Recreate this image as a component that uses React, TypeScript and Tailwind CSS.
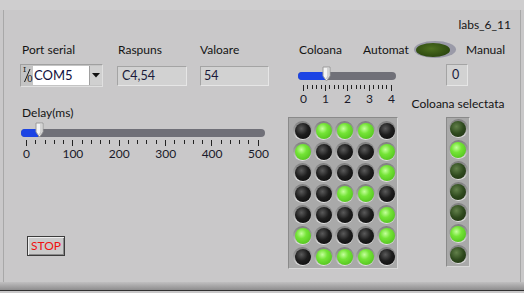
const matrix = [
  [0, 1, 1, 1, 0],
  [1, 0, 0, 0, 1],
  [0, 0, 0, 0, 1],
  [0, 0, 1, 1, 0],
  [0, 0, 0, 0, 1],
  [1, 0, 0, 0, 1],
  [0, 1, 1, 1, 0],
]
const selected = [0, 1, 0, 0, 0, 1, 0]

const Led = ({ on, dark }: { on: boolean; dark?: boolean }) => {
  const fill = on
    ? 'bg-[radial-gradient(circle_at_40%_35%,#c4ff9c_0%,#74e436_35%,#46b416_100%)]'
    : dark
      ? 'bg-[radial-gradient(circle_at_40%_35%,#62804a_0%,#2f4a1e_50%,#1c2c10_100%)]'
      : 'bg-[radial-gradient(circle_at_40%_35%,#5a5a5a_0%,#1e1e1e_45%,#080808_100%)]'
  return (
    <div className="w-[21px] h-[21px] flex items-center justify-center">
      <div className="w-[19px] h-[19px] rounded-full bg-[linear-gradient(#7e7e7e,#a0a0a0_50%,#e4e4e4)] flex items-center justify-center">
        <div className={`w-[16px] h-[16px] rounded-full ${fill}`} />
      </div>
    </div>
  )
}

const Thumb = ({ left, top }: { left: number; top: number }) => (
  <svg className="absolute" style={{ left, top }} width="9" height="16" viewBox="0 0 9 16">
    <path d="M1 1 H8 V10 L4.5 15 L1 10 Z" fill="#f4f4f4" stroke="#9a9a9a" strokeWidth="1" />
    <path d="M6 2 V10 L4.5 13" fill="none" stroke="#c8c8c8" strokeWidth="1.5" />
  </svg>
)

const Scale = ({ labels, minor, width }: { labels: string[]; minor: number; width: number }) => {
  const count = (labels.length - 1) * minor + 1
  return (
    <div style={{ width }}>
      <div className="flex justify-between items-start h-[6px]">
        {Array.from({ length: count }).map((_, i) => (
          <div key={i} className={`w-px bg-[#222] ${i % minor === 0 ? 'h-[6px]' : 'h-[4px]'}`} />
        ))}
      </div>
      <div className="flex justify-between mt-[1px]">
        {labels.map((l) => (
          <div key={l} className="w-px flex justify-center">
            <span className="whitespace-nowrap text-[12px] leading-[13px] text-[#1a1a2a]">{l}</span>
          </div>
        ))}
      </div>
    </div>
  )
}

const Box = ({ children, className = '' }: { children: React.ReactNode; className?: string }) => (
  <div
    className={`border border-t-[#a4a4a4] border-l-[#a4a4a4] border-b-[#e6e6e6] border-r-[#e6e6e6] bg-[#d2d2d2] flex items-center text-[12.5px] text-[#1a1a3a] ${className}`}
  >
    {children}
  </div>
)

const IoIcon = () => (
  <div className="w-[11px] h-[19px] relative text-[#1a1a1a] font-['DejaVu_Serif',serif]">
    <span className="absolute left-[1px] top-[0px] text-[8px] leading-[8px]">I</span>
    <svg className="absolute left-0 top-0" width="11" height="19" viewBox="0 0 11 19">
      <path d="M8 3 L2.5 16" stroke="#1a1a1a" strokeWidth="1" />
    </svg>
    <span className="absolute left-[5px] top-[9px] text-[9px] leading-[9px]">0</span>
  </div>
)

export default function App() {
  return (
    <div className="w-[524px] h-[293px] bg-[#c9c8c9] flex flex-col overflow-hidden font-['Lato',sans-serif] text-[12px] text-[#141414]">
      <div className="h-[10px] bg-[#cfcecf] shrink-0" />
      <div className="flex-1 mx-[3px] border-l border-r border-[#a8a8a8] bg-[#c9c8c9] flex flex-col pl-[16px]">
        <div className="h-[14px] mt-[8px] flex justify-end pr-[9px] leading-[14px]">labs_6_11</div>

        <div className="h-[17px] mt-[9px] flex items-center leading-[14px]">
          <div className="w-[98px] pl-[2px]">Port serial</div>
          <div className="w-[82px]">Raspuns</div>
          <div className="w-[99px]">Valoare</div>
          <div className="w-[64px]">Coloana</div>
          <div className="w-[51px]">Automat</div>
          <div className="w-[42px] h-[17px] rounded-[50%] bg-[#9a9aa8] flex items-center pl-[2px]">
            <div className="w-[34px] h-[14px] rounded-[50%] bg-[radial-gradient(ellipse_at_45%_40%,#4e7020,#2e4a10_70%,#1e300a)]" />
          </div>
          <div className="ml-[10px]">Manual</div>
        </div>

        <div className="flex mt-[6px]">
          {/* left column */}
          <div className="w-[250px] flex flex-col">
            <div className="flex h-[24px]">
              <div className="w-[83px] h-[23px] border border-t-[#a0a0a0] border-l-[#a0a0a0] border-b-[#e0e0e0] border-r-[#e0e0e0] bg-[#c4c4c4] flex items-center pl-[1px]">
                <IoIcon />
                <div className="w-[56px] h-[19px] bg-white flex items-center pl-[1px] text-[13px] text-[#101040]">COM5</div>
                <div className="w-[13px] h-[19px] bg-[#d0d0d0] border-l border-[#a0a0a0] flex items-center justify-center">
                  <svg width="8" height="5" viewBox="0 0 8 5"><path d="M0 0 H8 L4 4.5 Z" fill="#111" /></svg>
                </div>
              </div>
              <Box className="w-[70px] h-[20px] mt-[2px] ml-[14px] pl-[4px]">C4,54</Box>
              <Box className="w-[69px] h-[20px] mt-[2px] ml-[13px] pl-[3px]">54</Box>
            </div>

            <div className="mt-[18px] ml-[2px] leading-[14px]">Delay(ms)</div>
            <div className="relative h-[17px] mt-[1px] ml-[1px] w-[244px]">
              <div className="absolute left-0 right-0 top-[8px] h-[8px] rounded-full bg-[#707078] overflow-hidden">
                <div className="h-full w-[17px] bg-[#1c44e4]" />
              </div>
              <Thumb left={14} top={1} />
            </div>
            <div className="ml-[6px] mt-[2px]">
              <Scale labels={['0', '100', '200', '300', '400', '500']} minor={5} width={233} />
            </div>

            <button className="mt-[76px] ml-[7px] w-[38px] h-[20px] border border-[#3c3c3c] bg-[#cacaca] shadow-[inset_1px_1px_0_#eeeeee,inset_-1px_-1px_0_#8a8a8a] text-[#f01010] text-[12px] leading-[18px] font-['Lato',sans-serif]">
              STOP
            </button>
          </div>

          {/* middle column */}
          <div className="ml-[18px] w-[110px] flex flex-col">
            <div className="relative h-[17px] mt-[2px] ml-[10px] w-[98px]">
              <div className="absolute left-0 right-0 top-[6px] h-[8px] rounded-full bg-[#707078] overflow-hidden">
                <div className="h-full w-[27px] bg-[#1c44e4]" />
              </div>
              <Thumb left={24} top={0} />
            </div>
            <div className="ml-[15px] mt-[2px]">
              <Scale labels={['0', '1', '2', '3', '4']} minor={5} width={89} />
            </div>
            <div className="mt-[12px] w-[110px] h-[152px] bg-[#a9a9a9] border border-t-[#8a8a8a] border-l-[#8a8a8a] border-b-[#d8d8d8] border-r-[#d8d8d8] pl-[3px] pt-[2px] grid grid-cols-[repeat(5,21px)] auto-rows-[21px]">
              {matrix.flatMap((row, r) => row.map((v, c) => <Led key={`${r}-${c}`} on={v === 1} />))}
            </div>
          </div>

          {/* right column */}
          <div className="ml-[48px] w-[24px] flex flex-col items-center">
            <Box className="w-[22px] h-[22px] pl-[5px] self-start">0</Box>
            <div className="mt-[11px] whitespace-nowrap leading-[14px]">Coloana selectata</div>
            <div className="mt-[6px] w-[24px] h-[150px] bg-[#a9a9a9] border border-t-[#8a8a8a] border-l-[#8a8a8a] border-b-[#d8d8d8] border-r-[#d8d8d8] flex flex-col items-center">
              {selected.map((v, i) => (
                <Led key={i} on={v === 1} dark />
              ))}
            </div>
          </div>
        </div>
      </div>
      <div className="h-[8px] shrink-0 bg-[linear-gradient(#c0bfc0,#8e8d8e)]" />
      <div className="h-[1px] shrink-0 bg-[#303030]" />
      <div className="h-[2px] shrink-0 bg-[#c9c8c9]" />
    </div>
  )
}
